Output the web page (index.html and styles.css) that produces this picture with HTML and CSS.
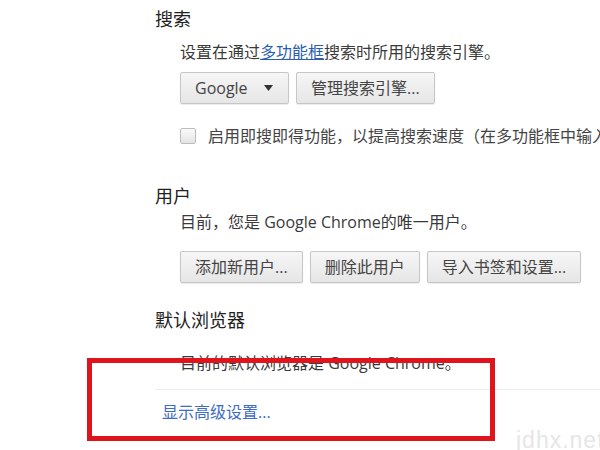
FILE: index.html
```html
<!DOCTYPE html>
<html lang="zh-CN">
<head>
  <meta charset="UTF-8">
  <title>设置</title>
  <link rel="stylesheet" href="styles.css">
</head>
<body>
  <div class="page">
    <div class="section">
      <div class="section-title">搜索</div>
      <div class="section-body">
        <div class="desc first">设置在通过<a class="inline-link" href="#">多功能框</a>搜索时所用的搜索引擎。</div>
        <div class="btn-row">
          <div class="btn select">
            <span>Google</span>
            <svg class="arrow" width="9" height="6" viewBox="0 0 9 6"><path d="M0 0h9L4.5 6z" fill="#333"/></svg>
          </div>
          <div class="btn">管理搜索引擎...</div>
        </div>
        <div class="check-row">
          <span class="checkbox"></span>
          <span class="check-text">启用即搜即得功能，以提高搜索速度（在多功能框中输入的内容可能会被记录）。</span>
        </div>
      </div>
    </div>

    <div class="section users">
      <div class="section-title">用户</div>
      <div class="section-body">
        <div class="desc tight">目前，您是 Google Chrome的唯一用户。</div>
        <div class="btn-row wide">
          <div class="btn">添加新用户...</div>
          <div class="btn">删除此用户</div>
          <div class="btn">导入书签和设置...</div>
        </div>
      </div>
    </div>

    <div class="section browser">
      <div class="section-title">默认浏览器</div>
      <div class="section-body">
        <div class="desc loose">目前的默认浏览器是 Google Chrome。</div>
      </div>
    </div>

    <div class="footer">
      <a class="advanced" href="#">显示高级设置...</a>
    </div>
  </div>

  <div class="highlight"></div>
  <div class="watermark">jdhx.net</div>
</body>
</html>
```

FILE: styles.css
```css
body {
  margin: 0;
  padding: 0;
  width: 600px;
  height: 450px;
  overflow: hidden;
  background: #ffffff;
  color: #3a3a3a;
  font-family: "Open Sans", "Noto Sans CJK SC", sans-serif;
  font-size: 16px;
  position: relative;
}
.page {
  padding-left: 155px;
  padding-top: 7px;
}
.section-title {
  font-size: 18px;
  line-height: 24px;
  color: #222222;
}
.section-body {
  padding-left: 25px;
}
.desc {
  line-height: 22px;
  white-space: nowrap;
}
.desc.first {
  margin-top: 10px;
}
.desc.tight {
  margin-top: 3px;
}
.desc.loose {
  margin-top: 20px;
}
.inline-link {
  color: #2a5db0;
  text-decoration: underline;
}
.btn-row {
  display: flex;
  gap: 7px;
  margin-top: 9px;
}
.btn-row.wide {
  margin-top: 18px;
}
.btn {
  height: 30px;
  line-height: 30px;
  padding: 0 14px;
  border: 1px solid #c6c6c6;
  border-radius: 2px;
  background: linear-gradient(to bottom, #f6f6f6, #e6e6e6);
  box-shadow: 0 1px 1px rgba(0, 0, 0, 0.08);
  color: #444444;
  white-space: nowrap;
}
.btn.select {
  display: flex;
  align-items: center;
  width: 79px;
  justify-content: space-between;
}
.arrow {
  margin-right: 1px;
}
.check-row {
  display: flex;
  align-items: center;
  gap: 12px;
  margin-top: 21px;
  line-height: 22px;
  white-space: nowrap;
}
.checkbox {
  flex: none;
  width: 14px;
  height: 14px;
  border: 1px solid #bdbdbd;
  border-radius: 2px;
  background: linear-gradient(to bottom, #fafafa, #e4e4e4);
}
.check-text {
  color: #444444;
}
.users {
  margin-top: 37px;
}
.browser {
  margin-top: 25px;
}
.footer {
  margin-top: 15px;
  border-top: 1px solid #ececec;
  padding-top: 11px;
  line-height: 22px;
}
.advanced {
  color: #3d6cc4;
  text-decoration: none;
  padding-left: 7px;
}
.highlight {
  position: absolute;
  left: 87px;
  top: 358px;
  width: 398px;
  height: 73px;
  border: 5px solid #e0141c;
}
.watermark {
  position: absolute;
  left: 516px;
  top: 427px;
  font-family: "Liberation Sans", sans-serif;
  font-size: 23px;
  letter-spacing: 1px;
  color: #e6e6e6;
  white-space: nowrap;
}
```
